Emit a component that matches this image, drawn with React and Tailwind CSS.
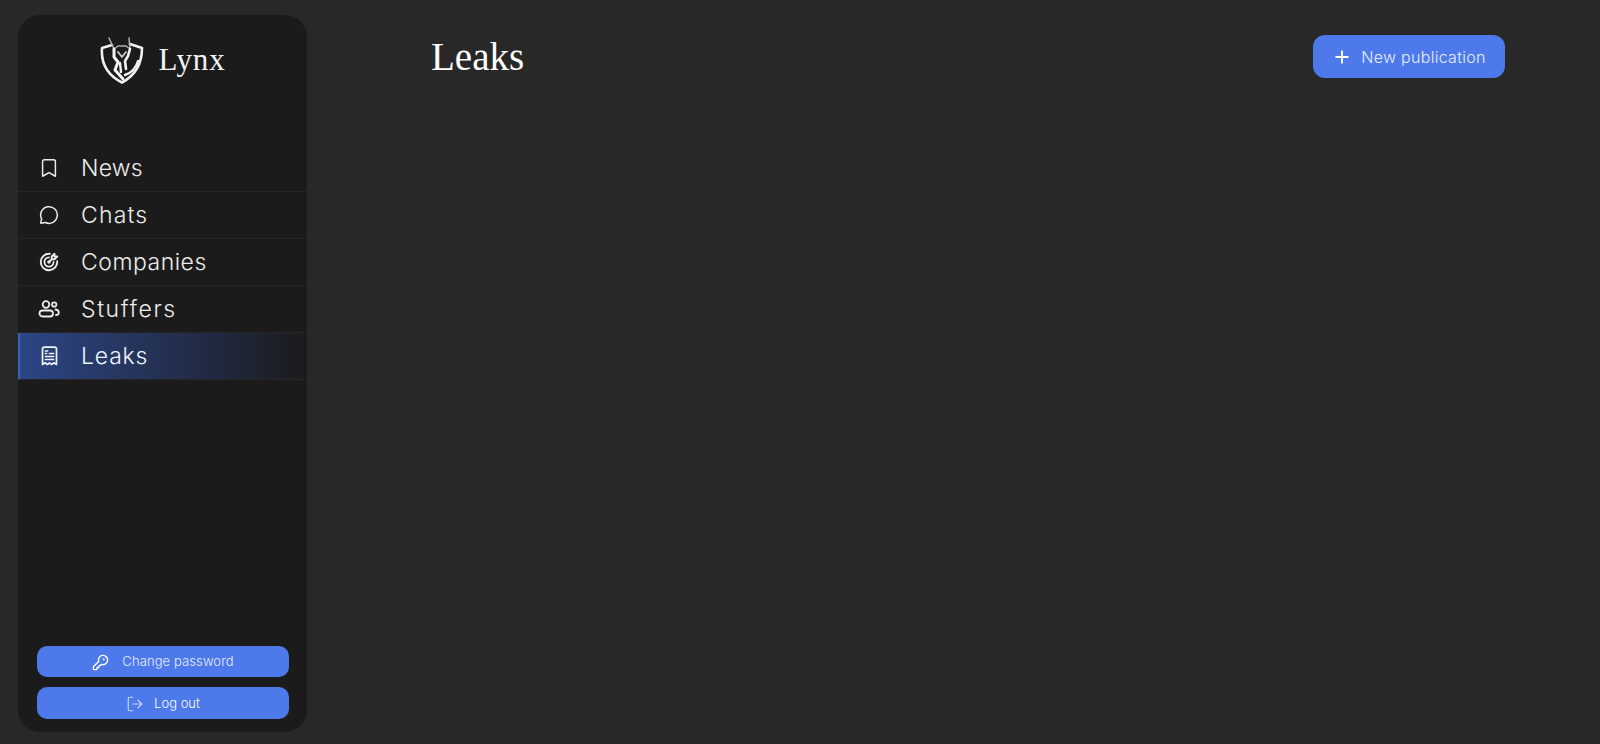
import React from "react";
import { Bookmark, MessageCircle, Plus, LogOut, KeyRound } from "lucide-react";
import { TbTargetArrow } from "react-icons/tb";

function LogoMark() {
  return (
    <svg width="44" height="47" viewBox="0 0 44 47" fill="none" stroke="#f2f2f2" strokeLinecap="round" strokeLinejoin="round">
      <path d="M12 8 L2 11 C1 24 5 37 22 45.5 C36 38 42 26 42 11 L30 7" strokeWidth="2.6" />
      <path d="M9 1 L14 12 L18 9 L26 9 L30 12 L29 1" strokeWidth="1.5" stroke="#b0b0b0" />
      <path d="M14 12 L14 20 L18 25 L15 33 L23 42" strokeWidth="3" />
      <path d="M30 12 L28 19 L25 24 L26 32" strokeWidth="2.6" />
      <path d="M20 26 L21 35 M25 38 C31 36 36 31 38 24" strokeWidth="2.4" />
      <path d="M18 15 L22 20 L26 15" strokeWidth="2" stroke="#c4c4c4" />
    </svg>
  );
}

function UsersIcon() {
  return (
    <svg width="22" height="20" viewBox="0 0 22 20" fill="none" stroke="currentColor" strokeWidth="1.8" strokeLinecap="round" strokeLinejoin="round">
      <circle cx="8" cy="5.5" r="3.3" />
      <rect x="1.5" y="11.5" width="13.5" height="6" rx="3" />
      <circle cx="16.2" cy="5.5" r="2.2" />
      <path d="M17.5 10.5 C19.5 10.8 20.8 12 20.8 13.5 C20.8 15 19.6 16 18 16" />
    </svg>
  );
}

function ReceiptIcon() {
  return (
    <svg width="17" height="20" viewBox="0 0 17 20" fill="none" stroke="currentColor" strokeWidth="1.7" strokeLinecap="round" strokeLinejoin="round">
      <path d="M1.5 3 C1.5 2 2.5 1.2 3.5 1.2 L13.5 1.2 C14.5 1.2 15.5 2 15.5 3 L15.5 18.5 L13 16.8 L10.5 18.5 L8.5 16.8 L6.5 18.5 L4 16.8 L1.5 18.5 Z" />
      <path d="M4.5 5 L6.5 5 M4.5 7.5 L5.5 7.5" />
      <path d="M8.5 7.5 L12.5 7.5 M4.5 10.5 L12.5 10.5 M4.5 13.5 L12.5 13.5" />
    </svg>
  );
}

const items = [
  { label: "News", icon: <Bookmark size={24} strokeWidth={1.6} />, track: "tracking-[0.2px]" },
  { label: "Chats", icon: <MessageCircle size={20} strokeWidth={1.8} />, track: "tracking-[1.2px]" },
  { label: "Companies", icon: <TbTargetArrow size={22} />, track: "tracking-[0.5px]" },
  { label: "Stuffers", icon: <UsersIcon />, track: "tracking-[1.6px]" },
  { label: "Leaks", icon: <ReceiptIcon />, track: "tracking-[0.8px]", active: true },
];

function App() {
  return (
    <div className="flex h-[744px] overflow-hidden bg-[#282828] pt-[15px] pl-[18px] font-['Inter',sans-serif]">
      <aside className="flex h-[717px] w-[289px] flex-col rounded-[22px] bg-[#1b1b1b]">
        <div className="flex h-[130px] items-start justify-center gap-[15px] pt-[22px]">
          <LogoMark />
          <span className="mt-[3px] font-['Liberation_Serif',serif] text-[31px] leading-[40px] tracking-[0.8px] text-[#f2f2f2]">
            Lynx
          </span>
        </div>
        <nav className="flex flex-col">
          {items.map((item) => (
            <div
              key={item.label}
              className={`flex h-[47px] items-center border-b border-[#262626] text-[23px] font-light ${
                item.active
                  ? "border-l-2 border-l-[#3a5fc0] bg-gradient-to-r from-[#2c4585] via-[#20283f] via-70% to-[#1b1b1b] pl-[18px] text-[#eef2ff]"
                  : "pl-[20px] text-[#ececec]"
              }`}
            >
              <span className="flex w-[22px] justify-center">{item.icon}</span>
              <span className={`ml-[21px] ${item.track}`}>{item.label}</span>
            </div>
          ))}
        </nav>
        <div className="mt-auto flex flex-col gap-[10px] pr-[18px] pb-[13px] pl-[19px]">
          <button className="flex h-[31px] items-center justify-center gap-[13px] rounded-[10px] bg-[#4d79ea] pt-px text-[13px] font-light tracking-[0.1px] text-[#e6edff]">
            <KeyRound size={17} strokeWidth={2} className="text-white" />
            Change password
          </button>
          <button className="flex h-[32px] items-center justify-center gap-[10px] rounded-[10px] bg-[#4d79ea] pt-px text-[13px] font-light text-white">
            <LogOut size={18} strokeWidth={1.6} className="text-[#c3d3fb]" />
            Log out
          </button>
        </div>
      </aside>
      <main className="ml-[124px] flex h-[63px] w-[1074px] items-start justify-between">
        <h1 className="mt-[19px] font-['Liberation_Serif',serif] text-[39px] leading-[46px] font-normal text-white">
          Leaks
        </h1>
        <button className="mt-[20px] flex h-[43px] w-[192px] items-center justify-center gap-[9px] rounded-[12px] bg-[#4d79ea] text-[16px] font-light tracking-[0.3px] text-[#e6edff]">
          <Plus size={20} strokeWidth={2.2} className="text-white" />
          New publication
        </button>
      </main>
    </div>
  );
}

export default App;
